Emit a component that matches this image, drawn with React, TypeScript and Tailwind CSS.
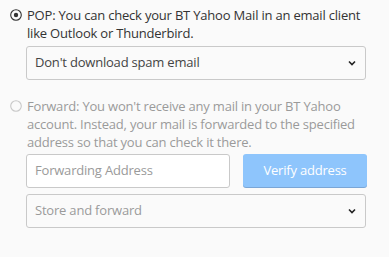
import { ReactNode } from "react";

function Radio({ checked }: { checked?: boolean }) {
  return (
    <svg width="12" height="12" viewBox="0 0 12 12" className="shrink-0 mt-[3px]">
      <circle
        cx="6"
        cy="6"
        r="5.3"
        fill="none"
        stroke={checked ? "#333" : "#c8c8c8"}
        strokeWidth="1.1"
      />
      {checked && <circle cx="6" cy="6" r="2.2" fill="#333" />}
    </svg>
  );
}

function Chevron() {
  return (
    <svg width="8" height="6" viewBox="0 0 8 6" className="shrink-0">
      <path d="M1 1.5 L4 4.5 L7 1.5" fill="none" stroke="#222" strokeWidth="1.6" />
    </svg>
  );
}

function Option({ checked, children }: { checked?: boolean; children: ReactNode }) {
  return (
    <div className="flex gap-[5px]">
      <Radio checked={checked} />
      <p className={`leading-[18px] ${checked ? "text-[#333]" : "text-[#9a9a9a]"}`}>{children}</p>
    </div>
  );
}

function SelectBox({ label, muted }: { label: string; muted?: boolean }) {
  return (
    <div className="h-[34px] w-[340px] flex items-center justify-between pl-[8px] pr-[9px] border border-[#c9c9c9] rounded-[3px] bg-[#fafafa]">
      <span className={muted ? "text-[#9a9a9a]" : "text-[#444]"}>{label}</span>
      <Chevron />
    </div>
  );
}

export default function App() {
  return (
    <div
      className="min-h-screen bg-[#fafafa] pl-[10px] pt-[6px] text-[13px] tracking-[-0.2px]"
      style={{ fontFamily: '"Open Sans", "Noto Sans", sans-serif' }}
    >
      <Option checked>
        POP: You can check your BT Yahoo Mail in an email client
        <br />
        like Outlook or Thunderbird.
      </Option>
      <div className="ml-[16px] mt-[4px]">
        <SelectBox label="Don't download spam email" />
      </div>

      <div className="mt-[17px]">
        <Option>
          Forward: You won't receive any mail in your BT Yahoo
          <br />
          account. Instead, your mail is forwarded to the specified
          <br />
          address so that you can check it there.
        </Option>
      </div>
      <div className="ml-[16px] mt-[3px] flex flex-col gap-[6px]">
        <div className="flex gap-[13px]">
          <div className="h-[34px] w-[204px] flex items-center px-[8px] border border-[#c9c9c9] rounded-[3px] bg-white text-[#9a9a9a]">
            Forwarding Address
          </div>
          <button className="h-[33px] w-[124px] rounded-[3px] bg-[#8ec5fc] text-white shadow-[0_1px_0_#7aa6d6]">
            Verify address
          </button>
        </div>
        <SelectBox label="Store and forward" muted />
      </div>
    </div>
  );
}
